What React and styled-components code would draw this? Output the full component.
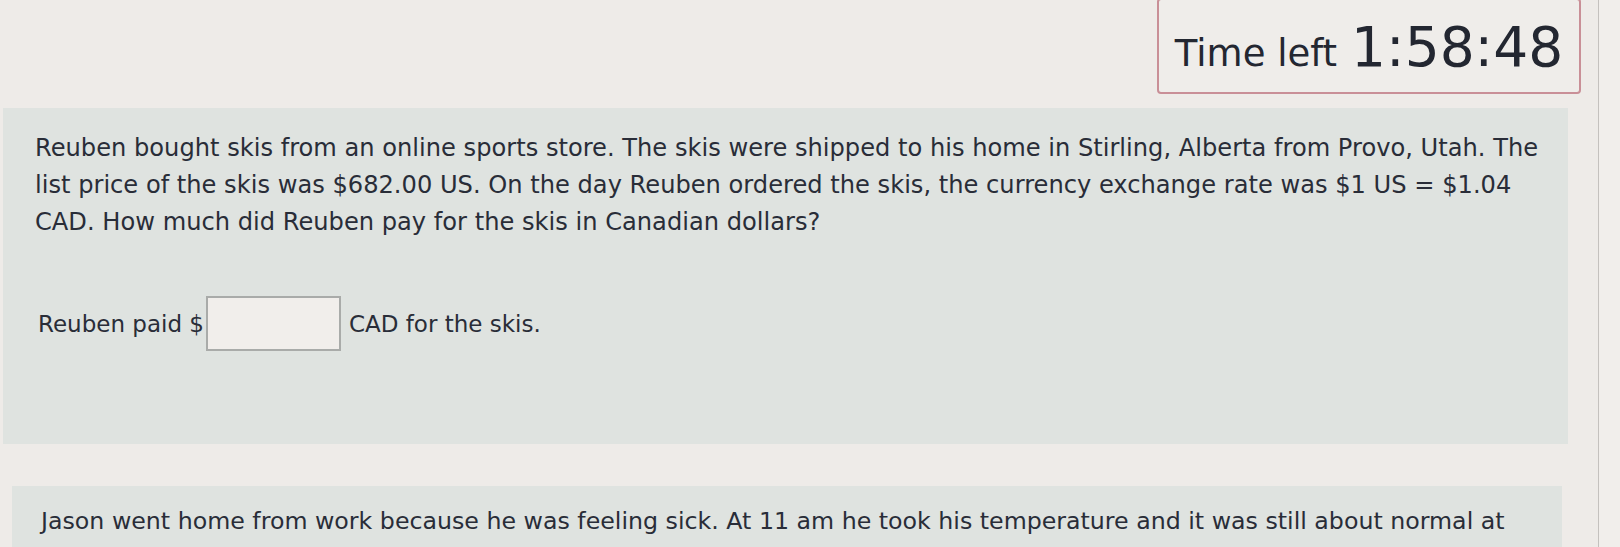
import React from "react";
import styled, { createGlobalStyle } from "styled-components";

const Global = createGlobalStyle`
  html, body { margin: 0; padding: 0; background: #f1eeeb; }
  body { font-family: "DejaVu Sans", Verdana, sans-serif; color: #292d38; overflow: hidden; }
`;

const Page = styled.div`
  width: 1598px;
  height: 547px;
  background: #eeebe8;
  border-right: 1px solid #c4c1be;
  display: flex;
  flex-direction: column;
  overflow: hidden;
`;

const Header = styled.div`
  display: flex;
  justify-content: flex-end;
  padding-right: 17px;
`;

const Timer = styled.div`
  width: 424px;
  height: 96px;
  box-sizing: border-box;
  margin-top: -2px;
  border: 2px solid #c98f97;
  border-radius: 4px;
  background: #efedea;
  display: flex;
  align-items: baseline;
  justify-content: center;
  gap: 14px;
  padding-top: 15px;
`;

const TimerLabel = styled.span`
  font-size: 37px;
  color: #232731;
`;

const TimerValue = styled.span`
  font-size: 55px;
  color: #232731;
`;

const Panel = styled.div`
  margin-top: ${(p) => p.$top}px;
  margin-left: ${(p) => p.$left}px;
  width: ${(p) => p.$width}px;
  height: ${(p) => p.$height}px;
  box-sizing: border-box;
  flex-shrink: 0;
  background: #dfe3e0;
  padding: ${(p) => p.$padTop}px 20px 0 ${(p) => p.$padLeft}px;
`;

const Text = styled.p`
  margin: 0;
  font-size: ${(p) => p.$size || 24}px;
  line-height: 37px;
  color: #292d38;
  white-space: nowrap;
`;

const AnswerRow = styled.div`
  margin-top: 55px;
  display: flex;
  align-items: center;
  font-size: 23px;
  color: #292d38;
  padding-left: 3px;
`;

const AnswerInput = styled.div`
  width: 135px;
  height: 55px;
  box-sizing: border-box;
  border: 2px solid #a9aba9;
  background: #f1eeeb;
  margin: 0 8px 0 2px;
`;

export default function App() {
  return (
    <>
      <Global />
      <Page>
        <Header>
          <Timer>
            <TimerLabel>Time left</TimerLabel>
            <TimerValue>1:58:48</TimerValue>
          </Timer>
        </Header>
        <Panel $top={14} $left={3} $width={1565} $height={336} $padTop={22} $padLeft={32}>
          <Text $size={24.15}>
            Reuben bought skis from an online sports store. The skis were shipped to his home in Stirling, Alberta from Provo, Utah. The
            <br />
            list price of the skis was $682.00 US. On the day Reuben ordered the skis, the currency exchange rate was $1 US = $1.04
            <br />
            CAD. How much did Reuben pay for the skis in Canadian dollars?
          </Text>
          <AnswerRow>
            <span>Reuben paid $</span>
            <AnswerInput />
            <span>CAD for the skis.</span>
          </AnswerRow>
        </Panel>
        <Panel $top={42} $left={12} $width={1550} $height={120} $padTop={17} $padLeft={29}>
          <Text $size={23.7}>
            Jason went home from work because he was feeling sick. At 11 am he took his temperature and it was still about normal at
            <br />
            98.4°F. By the time his wife came home at 3 pm, his temperature had risen to 101.2°F.
          </Text>
        </Panel>
      </Page>
    </>
  );
}
